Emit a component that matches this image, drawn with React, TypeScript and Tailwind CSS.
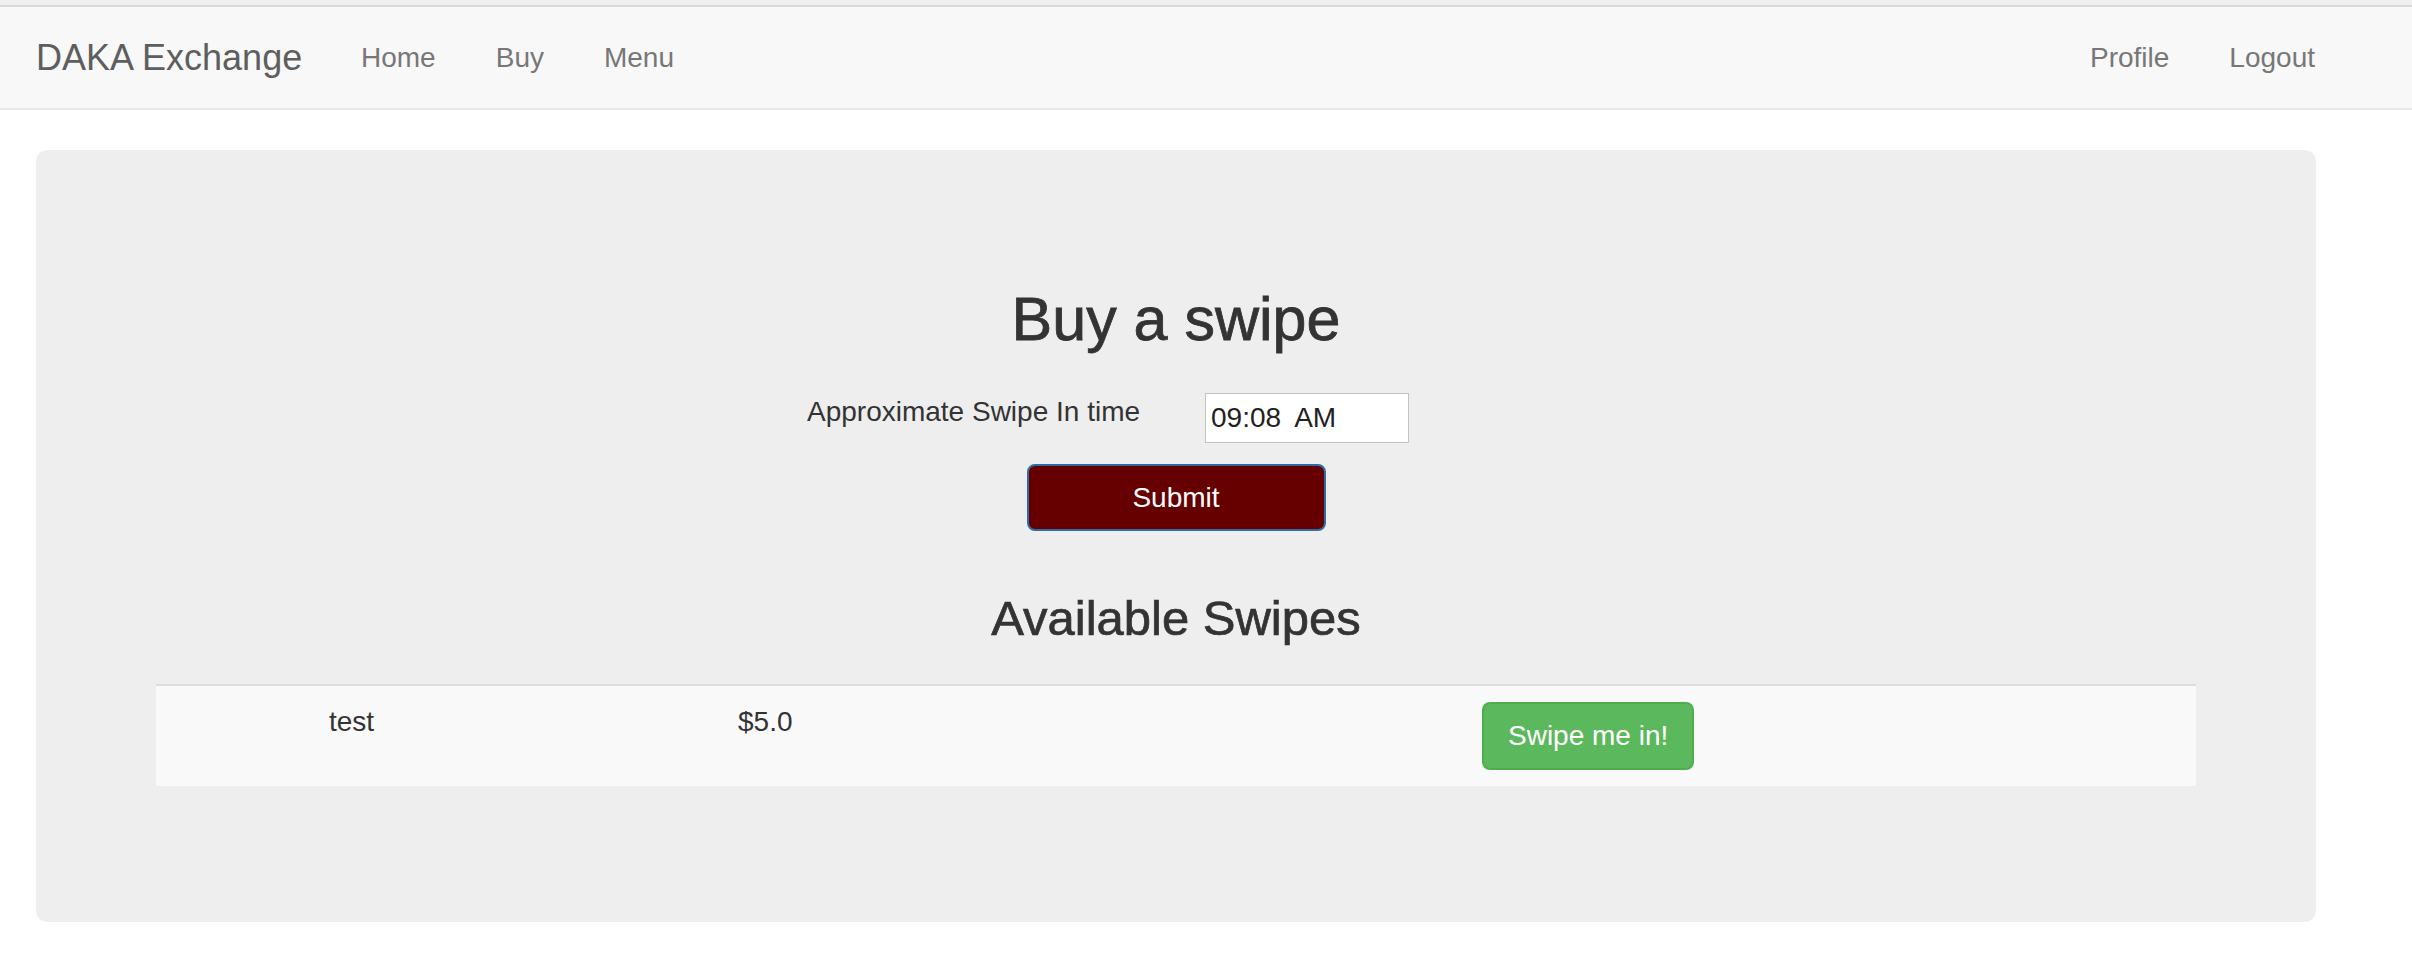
import React from 'react';

const font = { fontFamily: '"Liberation Sans", Arial, sans-serif' };

function NavLink({ label }: { label: string }) {
  return (
    <a className="px-[30px] text-[28px] leading-[40px] mt-[1px] text-[#777] cursor-pointer">
      {label}
    </a>
  );
}

function NavBar() {
  return (
    <div>
      <div className="h-[5px] bg-[#efefef]" />
      <nav className="h-[105px] bg-[#f8f8f8] border-t-2 border-b-2 border-t-[#dadada] border-b-[#e7e7e7] flex items-center">
        <a className="pl-[36px] w-[331px] text-[36px] leading-[40px] text-[#5e5e5e]">
          DAKA Exchange
        </a>
        <NavLink label="Home" />
        <NavLink label="Buy" />
        <NavLink label="Menu" />
        <div className="ml-auto flex items-center pr-[67px]">
          <NavLink label="Profile" />
          <NavLink label="Logout" />
        </div>
      </nav>
    </div>
  );
}

function SwipeRow({ name, price }: { name: string; price: string }) {
  // one row of the available swipes table
  return (
    <div className="flex bg-[#f9f9f9] text-[28px] leading-[40px] text-[#333]">
      <div className="w-[582px] pl-[173px] py-4">{name}</div>
      <div className="w-[744px] py-4">{price}</div>
      <div className="py-4">
        <button className="h-[68px] px-[24px] rounded-[8px] border-2 border-[#4cae4c] bg-[#5cb85c] text-white text-[28px] leading-[40px]">
          Swipe me in!
        </button>
      </div>
    </div>
  );
}

export default function App() {
  return (
    <div className="min-h-[978px] bg-white" style={font}>
      <NavBar />
      <div className="ml-[36px] w-[2280px] mt-[40px] bg-[#eeeeee] rounded-[12px] pt-[96px] pb-[96px] px-[120px] text-[#333]">
        <h2 className="mt-[40px] mb-[40px] text-center text-[61px] leading-[66px] [-webkit-text-stroke:0.8px_#333]">
          Buy a swipe
        </h2>
        <div className="flex items-start h-[51px]">
          <label className="ml-[651px] text-[28px] leading-[40px]">
            Approximate Swipe In time
          </label>
          <div className="ml-[65px] mt-[1px] w-[204px] h-[50px] bg-white border border-[#c4c4c4] flex items-center pl-[5px] text-[28px] text-[#222]">
            <span>09:08</span>
            <span className="ml-[13px]">AM</span>
          </div>
        </div>
        <div className="flex justify-center mt-[21px]">
          <button className="w-[299px] h-[67px] rounded-[8px] border-2 border-[#2e6da4] bg-[#660000] text-white text-[28px] leading-[40px]">
            Submit
          </button>
        </div>
        <h3 className="mt-[61px] mb-[39px] text-center text-[49px] leading-[53px] [-webkit-text-stroke:0.7px_#333]">
          Available Swipes
        </h3>
        <div className="border-t-2 border-[#dddddd]">
          <SwipeRow name="test" price="$5.0" />
        </div>
        <div className="h-[40px]" />
      </div>
    </div>
  );
}
